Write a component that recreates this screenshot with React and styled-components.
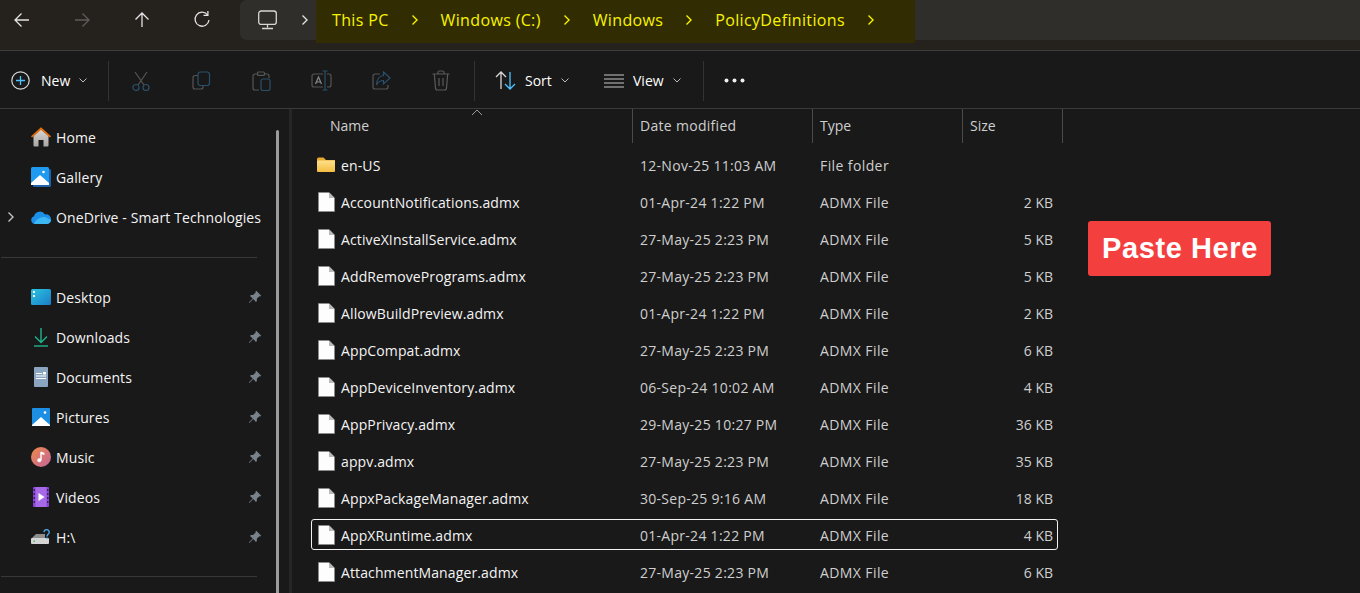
import React from 'react';
import styled, { createGlobalStyle } from 'styled-components';

const GlobalStyle = createGlobalStyle`
  html, body { margin: 0; padding: 0; background: #191919; overflow: hidden; }
  body { font-family: 'Open Sans', 'Noto Sans', sans-serif; }
`;

const quickItems = [
  { name: 'Home', icon: 'home' },
  { name: 'Gallery', icon: 'gallery' },
  { name: 'OneDrive - Smart Technologies', icon: 'cloud', expand: true },
];

const pinnedItems = [
  { name: 'Desktop', icon: 'desktop' },
  { name: 'Downloads', icon: 'downloads' },
  { name: 'Documents', icon: 'documents' },
  { name: 'Pictures', icon: 'pictures' },
  { name: 'Music', icon: 'music' },
  { name: 'Videos', icon: 'videos' },
  { name: 'H:\\', icon: 'drive' },
];

const files = [
  ['en-US', '12-Nov-25 11:03 AM', 'File folder', ''],
  ['AccountNotifications.admx', '01-Apr-24 1:22 PM', 'ADMX File', '2 KB'],
  ['ActiveXInstallService.admx', '27-May-25 2:23 PM', 'ADMX File', '5 KB'],
  ['AddRemovePrograms.admx', '27-May-25 2:23 PM', 'ADMX File', '5 KB'],
  ['AllowBuildPreview.admx', '01-Apr-24 1:22 PM', 'ADMX File', '2 KB'],
  ['AppCompat.admx', '27-May-25 2:23 PM', 'ADMX File', '6 KB'],
  ['AppDeviceInventory.admx', '06-Sep-24 10:02 AM', 'ADMX File', '4 KB'],
  ['AppPrivacy.admx', '29-May-25 10:27 PM', 'ADMX File', '36 KB'],
  ['appv.admx', '27-May-25 2:23 PM', 'ADMX File', '35 KB'],
  ['AppxPackageManager.admx', '30-Sep-25 9:16 AM', 'ADMX File', '18 KB'],
  ['AppXRuntime.admx', '01-Apr-24 1:22 PM', 'ADMX File', '4 KB'],
  ['AttachmentManager.admx', '27-May-25 2:23 PM', 'ADMX File', '6 KB'],
];

const crumbs = ['This PC', 'Windows (C:)', 'Windows', 'PolicyDefinitions'];

const Page = styled.div`
  width: 1360px;
  height: 593px;
  overflow: hidden;
  color: #fff;
  background: #191919;
  display: flex;
  flex-direction: column;
`;

const TopBar = styled.div`
  height: 51px;
  flex: none;
  box-sizing: border-box;
  background: #25211d;
  border-bottom: 1px solid #3f3d3b;
  display: flex;
  align-items: flex-start;
`;

const NavGroup = styled.div`
  width: 240px;
  height: 40px;
  flex: none;
  display: flex;
  align-items: center;
  gap: 16px;
`;

const NavBtn = styled.div`
  width: 44px;
  height: 40px;
  display: flex;
  align-items: center;
  justify-content: center;
`;

const AddressBar = styled.div`
  flex: 1;
  height: 40px;
  background: #2f2e2a;
  border-radius: 6px 0 0 6px;
  display: flex;
  align-items: flex-start;
`;

const PcSlot = styled.div`
  width: 76px;
  height: 40px;
  flex: none;
  display: flex;
  align-items: center;
  padding-left: 18px;
  box-sizing: border-box;
  gap: 24px;
`;

const Highlight = styled.div`
  width: 599px;
  height: 43px;
  flex: none;
  box-sizing: border-box;
  padding: 0 0 3px 16px;
  background: #322c03;
  display: flex;
  align-items: center;
  color: #f8f400;
  font-size: 16px;
  letter-spacing: 0.35px;
`;

const Crumb = styled.span`
  white-space: nowrap;
`;

const CrumbArrow = styled.span`
  width: 52px;
  flex: none;
  display: flex;
  justify-content: center;
`;

const ToolBar = styled.div`
  height: 58px;
  flex: none;
  box-sizing: border-box;
  padding-top: 2px;
  border-bottom: 1px solid #3a3a3a;
  background: #191919;
  display: flex;
  align-items: center;
`;

const NewBtn = styled.div`
  width: 108px;
  flex: none;
  display: flex;
  align-items: center;
  padding-left: 11px;
  box-sizing: border-box;
  font-size: 14px;
  gap: 11px;
`;

const ToolSep = styled.div`
  width: 1px;
  height: 40px;
  background: #333;
  flex: none;
  margin-left: ${(p) => p.$shift || 0}px;
`;

const ToolIcon = styled.div`
  width: 60px;
  height: 40px;
  flex: none;
  display: flex;
  align-items: center;
  justify-content: center;
  margin-left: ${(p) => p.$shift || 0}px;
`;

const TextBtn = styled.div`
  display: flex;
  align-items: center;
  flex: none;
  font-size: 14px;
  gap: ${(p) => p.$gap}px;
  width: ${(p) => p.$width}px;
  padding-left: ${(p) => p.$left}px;
  box-sizing: border-box;
`;

const Chevron = styled.svg`
  margin-left: ${(p) => p.$shift || 0}px;
`;

const Body = styled.div`
  flex: 1;
  display: flex;
  min-height: 0;
`;

const Sidebar = styled.div`
  width: 292px;
  flex: none;
  box-sizing: border-box;
  border-right: 3px solid #262626;
  position: relative;
  padding-top: 8px;
`;

const ScrollThumb = styled.div`
  position: absolute;
  left: 276px;
  top: 21px;
  bottom: 0;
  width: 3px;
  background: #9c9c9c;
  border-radius: 2px 2px 0 0;
`;

const NavItem = styled.div`
  height: 40px;
  display: flex;
  align-items: center;
  font-size: 14px;
  letter-spacing: 0.12px;
  color: #f4f4f4;
`;

const Expander = styled.div`
  width: 30px;
  flex: none;
  display: flex;
  justify-content: center;
  padding-right: 9px;
  box-sizing: border-box;
`;

const NavIcon = styled.div`
  width: 22px;
  height: 22px;
  flex: none;
  margin-right: 4px;
  display: flex;
  align-items: center;
  justify-content: center;
`;

const NavLabel = styled.span`
  white-space: nowrap;
  flex: 1;
`;

const Pin = styled.div`
  width: 14px;
  flex: none;
  margin-right: 27px;
  margin-left: auto;
  display: flex;
`;

const NavDivider = styled.div`
  height: 1px;
  width: 256px;
  margin: ${(p) => p.$margin};
  background: #383838;
`;

const Main = styled.div`
  flex: 1;
  min-width: 0;
  padding-left: 19px;
  position: relative;
`;

const HeaderRow = styled.div`
  height: 34px;
  display: grid;
  grid-template-columns: 322px 180px 150px 100px;
  font-size: 14px;
  color: #cfcfcf;
  position: relative;
`;

const HeaderCell = styled.div`
  display: flex;
  align-items: center;
  padding-left: ${(p) => p.$left}px;
  padding-bottom: 2px;
  letter-spacing: ${(p) => p.$spacing || 0}px;
  border-right: 1px solid #4a4a4a;
  box-sizing: border-box;
`;

const SortCaret = styled.svg`
  position: absolute;
  left: 160px;
  top: 0;
`;

const Rows = styled.div`
  display: flex;
  flex-direction: column;
  width: 747px;
  margin-top: 4px;
`;

const Row = styled.div`
  height: 37px;
  flex: none;
  display: grid;
  grid-template-columns: 322px 180px 146px 94px;
  align-items: center;
  font-size: 14px;
  color: #cfcfcf;
  box-sizing: border-box;
  position: relative;
  ${(p) => p.$focused && `
    &::after {
      content: '';
      position: absolute;
      inset: 2px 0 4px;
      border: 1px solid #f2f2f2;
      border-radius: 3px;
    }
  `}
`;

const NameCell = styled.div`
  display: flex;
  align-items: center;
  color: #f4f4f4;
  padding-left: 6px;
  white-space: nowrap;
  letter-spacing: 0.12px;
`;

const FileGlyph = styled.div`
  width: 24px;
  flex: none;
  display: flex;
  box-sizing: border-box;
  padding-left: ${(p) => (p.$folder ? 0 : 1)}px;
  margin-top: -2px;
`;

const Cell = styled.div`
  white-space: nowrap;
  padding-left: 7px;
  letter-spacing: ${(p) => p.$spacing}px;
`;

const SizeCell = styled.div`
  text-align: right;
  white-space: nowrap;
`;

const PasteBadge = styled.div`
  position: absolute;
  left: 796px;
  top: 112px;
  width: 183px;
  height: 55px;
  padding-left: 1px;
  box-sizing: border-box;
  background: #f43f3f;
  border-radius: 3px;
  color: #fff;
  font-family: 'Liberation Sans', Arial, sans-serif;
  font-weight: 700;
  font-size: 29px;
  display: flex;
  align-items: center;
  justify-content: center;
  letter-spacing: 0.6px;
`;

const Arrow = ({ d, color = '#e4e4e4', size = 18 }) => (
  <svg width={size} height={size} viewBox="0 0 18 18" fill="none" stroke={color} strokeWidth="1.3">
    <path d={d} />
  </svg>
);

const CrumbChevron = ({ color }) => (
  <svg width="8" height="12" viewBox="0 0 8 12" fill="none" stroke={color} strokeWidth="1.4">
    <path d="M1.5 1.5 6 6l-4.5 4.5" />
  </svg>
);

const SmallChevron = ({ shift }) => (
  <Chevron $shift={shift} width="8" height="5" viewBox="0 0 8 5" fill="none" stroke="#bdbdbd" strokeWidth="1">
    <path d="M.5.5 4 4 7.5.5" />
  </Chevron>
);

const FileIcon = () => (
  <svg width="17" height="20" viewBox="0 0 17 20">
    <path d="M.5.5h10.5l5.5 5.5v13.5H.5z" fill="#fdfdfd" stroke="#8c8c8c" strokeWidth=".8" />
    <path d="M11 .8V6h5.2z" fill="#b9b9b9" />
  </svg>
);

const FolderIcon = () => (
  <svg width="18" height="15" viewBox="0 0 18 15">
    <defs>
      <linearGradient id="fold" x1="0" y1="0" x2="0" y2="1">
        <stop offset="0" stopColor="#fde08a" />
        <stop offset="1" stopColor="#f5bd42" />
      </linearGradient>
    </defs>
    <path d="M0 2A1.5 1.5 0 0 1 1.5.5h5L9 3h9v3H0z" fill="#e9a92d" />
    <rect y="3.4" width="18" height="11.6" rx="1" fill="url(#fold)" />
  </svg>
);

const PinIcon = () => (
  <svg width="14" height="14" viewBox="0 0 14 14" fill="#79828a">
    <path d="M8.3.8 13.2 5.7 12.2 6.5 11.4 6.2 8.8 8.8 8.9 11 8 11.9 5.2 9.1 1.4 12.9.9 12.6 4.7 8.6 2 5.9 2.9 5 5 5.1 7.7 2.5 7.5 1.6z" />
  </svg>
);

const NavGlyph = ({ name }) => {
  switch (name) {
    case 'home':
      return (
        <svg width="20" height="20" viewBox="0 0 20 20">
          <defs>
            <linearGradient id="homeBody" x1="0" y1="0" x2="0" y2="1">
              <stop offset="0" stopColor="#d8d6d4" />
              <stop offset="1" stopColor="#a9a7a5" />
            </linearGradient>
          </defs>
          <path d="M2.5 9 10 2.5 17.5 9v9.5a1 1 0 0 1-1 1H12.5V13h-5v6.5H3.5a1 1 0 0 1-1-1z" fill="url(#homeBody)" />
          <path d="M0 9.2 10 .3l10 8.900-1.100 1.300L10 2.800 1.100 10.500z" fill="#e8700d" />
        </svg>
      );
    case 'gallery':
      return (
        <svg width="20" height="20" viewBox="0 0 20 20">
          <rect x="2" y="2" width="18" height="18" rx="1.5" fill="#1f62ad" />
          <rect width="18" height="18" rx="1.5" fill="#1e9bf0" />
          <path d="M0 16 9 8l9 8v2H0z" fill="#fff" />
          <circle cx="12.5" cy="5" r="1.3" fill="#fff" />
        </svg>
      );
    case 'cloud':
      return (
        <svg width="20" height="14" viewBox="0 0 20 14">
          <path d="M4 14a4 4 0 0 1-1-7.800A6 6 0 0 1 14 4.500 4.800 4.800 0 0 1 20 9.500 4.500 4.500 0 0 1 16 14z" fill="#1c8fe8" />
          <path d="M3 14c2-5 6-7 11-7l6 3a4.500 4.500 0 0 1-4 4z" fill="#3bb7f3" />
        </svg>
      );
    case 'desktop':
      return (
        <svg width="20" height="16" viewBox="0 0 20 16">
          <defs>
            <linearGradient id="desk" x1="0" y1="0" x2="1" y2="1">
              <stop offset="0" stopColor="#2bc4e0" />
              <stop offset="1" stopColor="#1a7dc9" />
            </linearGradient>
          </defs>
          <rect width="20" height="16" rx="1.5" fill="url(#desk)" />
          <rect x="2" y="2" width="2" height="2" fill="#fff" />
          <rect x="2" y="6" width="2" height="2" fill="#fff" />
        </svg>
      );
    case 'downloads':
      return (
        <svg width="18" height="20" viewBox="0 0 18 20" fill="none" stroke="#20b48c" strokeWidth="1.4">
          <path d="M9 1v14M3 9.500l6 6 6-6" />
          <path d="M2 19h14" />
        </svg>
      );
    case 'documents':
      return (
        <svg width="14" height="20" viewBox="0 0 14 20">
          <rect width="14" height="20" rx="1" fill="#8ba4c0" />
          <path d="M2 6h6v1H2zM2 8.500h10v1H2zM2 11h10v1H2zM9 5h3v2.500H9z" fill="#fff" />
        </svg>
      );
    case 'pictures':
      return (
        <svg width="18" height="18" viewBox="0 0 18 18">
          <rect width="18" height="18" rx="1" fill="#1c8fe4" />
          <path d="M0 17 9 9l9 8v1H0z" fill="#fff" />
          <circle cx="13" cy="4.5" r="1.3" fill="#fff" />
        </svg>
      );
    case 'music':
      return (
        <svg width="20" height="20" viewBox="0 0 20 20">
          <defs>
            <linearGradient id="mus" x1="0" y1="0" x2="1" y2="1">
              <stop offset="0" stopColor="#ee8a4a" />
              <stop offset="1" stopColor="#c2649c" />
            </linearGradient>
          </defs>
          <circle cx="10" cy="10" r="10" fill="url(#mus)" />
          <path d="M10 5v8" stroke="#fff" strokeWidth="1.4" />
          <path d="M10 4.500 13.500 6v2L10 7z" fill="#fff" />
          <circle cx="8.3" cy="13.3" r="2" fill="#fff" />
        </svg>
      );
    case 'videos':
      return (
        <svg width="16" height="20" viewBox="0 0 16 20">
          <rect width="16" height="20" rx="1" fill="#8a45d8" />
          <rect x="2.5" width="11" height="20" fill="#a66ae8" />
          <path d="M5.500 6v8l6-4z" fill="#fff" />
          <path d="M.6 2h1.200v2H.6zM.6 6h1.200v2H.6zM.6 10h1.200v2H.6zM.6 14h1.200v2H.6zM14.200 2h1.200v2h-1.200zM14.200 6h1.200v2h-1.200zM14.200 10h1.200v2h-1.200zM14.200 14h1.200v2h-1.200z" fill="#2a1845" />
        </svg>
      );
    case 'drive':
      return (
        <svg width="20" height="16" viewBox="0 0 20 16">
          <path d="M1 9 5 5h9v4z" fill="#8e8e8e" />
          <rect y="9" width="18" height="6" rx="1" fill="#d4d4d4" />
          <rect x="2.5" y="11.5" width="1.4" height="1.4" fill="#31c24a" />
          <path d="M13 3.200a2.600 2.600 0 1 1 4 2.200c-.8.600-1 1-1 2.200" fill="none" stroke="#4aa3e6" strokeWidth="1.4" />
          <rect x="15.3" y="8.4" width="1.4" height="1.4" fill="#4aa3e6" />
        </svg>
      );
    default:
      return null;
  }
};

const SideRow = ({ item, pinned }) => (
  <NavItem>
    <Expander>
      {item.expand && <CrumbChevron color="#c4c4c4" />}
    </Expander>
    <NavIcon><NavGlyph name={item.icon} /></NavIcon>
    <NavLabel>{item.name}</NavLabel>
    {pinned && <Pin><PinIcon /></Pin>}
  </NavItem>
);

export default function App() {
  return (
    <Page>
      <GlobalStyle />
      <TopBar>
        <NavGroup>
          <NavBtn><Arrow d="M16 9H2M8.500 2.500 2 9l6.500 6.500" /></NavBtn>
          <NavBtn><Arrow d="M2 9h14M9.500 2.500 16 9l-6.500 6.500" color="#5d5c5a" /></NavBtn>
          <NavBtn><Arrow d="M9 16V2M2.500 8.500 9 2l6.500 6.500" /></NavBtn>
          <NavBtn>
            <svg width="18" height="18" viewBox="0 0 18 18" fill="none" stroke="#e4e4e4" strokeWidth="1.3">
              <path d="M14.500 3.800A7 7 0 1 0 16 9" />
              <path d="M10.500 4.400h4.400V0" />
            </svg>
          </NavBtn>
        </NavGroup>
        <AddressBar>
          <PcSlot>
            <svg width="19" height="20" viewBox="0 0 19 20" fill="none" stroke="#d6d6d6" strokeWidth="1.3">
              <rect x=".7" y="1" width="17.6" height="13.4" rx="2.5" />
              <path d="M9.500 14.500v3M4 18.500h11" />
            </svg>
            <CrumbChevron color="#e0e0e0" />
          </PcSlot>
          <Highlight>
            {crumbs.map((c) => (
              <React.Fragment key={c}>
                <Crumb>{c}</Crumb>
                <CrumbArrow><CrumbChevron color="#f8f400" /></CrumbArrow>
              </React.Fragment>
            ))}
          </Highlight>
        </AddressBar>
      </TopBar>

      <ToolBar>
        <NewBtn>
          <svg width="19" height="19" viewBox="0 0 19 19" fill="none">
            <circle cx="9.5" cy="9.5" r="8.7" stroke="#d8d8d8" strokeWidth="1.2" />
            <path d="M9.500 5v9M5 9.500h9" stroke="#4cc2ff" strokeWidth="1.3" />
          </svg>
          <span>New</span>
          <SmallChevron shift={-2} />
        </NewBtn>
        <ToolSep />
        <ToolIcon $shift={2}>
          <svg width="18" height="20" viewBox="0 0 18 20" fill="none" stroke="#29506b" strokeWidth="1.2">
            <path d="M3 1l9 13M15 1 6 14" stroke="#555" />
            <circle cx="4" cy="16.5" r="3" />
            <circle cx="14" cy="16.5" r="3" />
          </svg>
        </ToolIcon>
        <ToolIcon>
          <svg width="19" height="19" viewBox="0 0 19 19" fill="none" strokeWidth="1.2">
            <path d="M6 4.500H3a2 2 0 0 0-2 2V16a2 2 0 0 0 2 2h6a2 2 0 0 0 2-2v-1" stroke="#555" />
            <rect x="6" y="1" width="11.5" height="13.5" rx="2.5" stroke="#29506b" />
          </svg>
        </ToolIcon>
        <ToolIcon>
          <svg width="19" height="20" viewBox="0 0 19 20" fill="none" strokeWidth="1.2">
            <path d="M6 3H3a2 2 0 0 0-2 2v12a2 2 0 0 0 2 2h4M12 3h3a2 2 0 0 1 2 2v2" stroke="#555" />
            <rect x="5.5" y="1" width="7" height="3.4" rx="1" stroke="#555" />
            <rect x="9" y="8" width="9" height="11.5" rx="2" stroke="#29506b" />
          </svg>
        </ToolIcon>
        <ToolIcon>
          <svg width="21" height="21" viewBox="0 0 21 21" fill="none" strokeWidth="1.2">
            <path d="M12 4H3a2 2 0 0 0-2 2v9a2 2 0 0 0 2 2h9M16 4h2a2 2 0 0 1 2 2v9a2 2 0 0 1-2 2h-2" stroke="#555" />
            <path d="M14 1v19M11.500 1h5M11.500 20h5" stroke="#29506b" />
            <path d="M4.500 14 7.500 7l3 7M5.600 12h4" stroke="#8a8a8a" />
          </svg>
        </ToolIcon>
        <ToolIcon>
          <svg width="19" height="19" viewBox="0 0 19 19" fill="none" strokeWidth="1.2">
            <path d="M8 3H3a2 2 0 0 0-2 2v11a2 2 0 0 0 2 2h11a2 2 0 0 0 2-2v-2" stroke="#555" />
            <path d="M11.500 1 18 7l-6.500 6V9.500C8 9.500 6 11 4.500 14c0-5.500 3-9 7-9.500z" stroke="#29506b" />
          </svg>
        </ToolIcon>
        <ToolIcon>
          <svg width="18" height="21" viewBox="0 0 18 21" fill="none" stroke="#5a5a5a" strokeWidth="1.2">
            <path d="M.5 4h17M6 4V2.500A1.500 1.500 0 0 1 7.500 1h3A1.500 1.500 0 0 1 12 2.500V4M2.300 4l1.200 14a2 2 0 0 0 2 2h7a2 2 0 0 0 2-2L15.700 4M7 8v8M11 8v8" />
          </svg>
        </ToolIcon>
        <ToolSep $shift={3} />
        <TextBtn $width={108} $left={20} $gap={9}>
          <svg width="21" height="19" viewBox="0 0 21 19" fill="none" strokeWidth="1.3">
            <path d="M6 18V1M1 6l5-5 5 5" stroke="#d8d8d8" />
            <path d="M15 1v17M10 13l5 5 5-5" stroke="#4cc2ff" />
          </svg>
          <span>Sort</span>
          <SmallChevron />
        </TextBtn>
        <TextBtn $width={120} $left={21} $gap={9}>
          <svg width="20" height="14" viewBox="0 0 20 14" stroke="#c8c8c8" strokeWidth="1.1">
            <path d="M0 1h20M0 5h20M0 9h20M0 13h20" />
          </svg>
          <span>View</span>
          <SmallChevron />
        </TextBtn>
        <ToolSep />
        <ToolIcon>
          <svg width="21" height="5" viewBox="0 0 21 5" fill="#f0f0f0">
            <circle cx="2.5" cy="2.5" r="2" />
            <circle cx="10.5" cy="2.5" r="2" />
            <circle cx="18.5" cy="2.5" r="2" />
          </svg>
        </ToolIcon>
      </ToolBar>

      <Body>
        <Sidebar>
          <ScrollThumb />
          {quickItems.map((i) => <SideRow key={i.name} item={i} />)}
          <NavDivider $margin="20px 0 19px 1px" />
          {pinnedItems.map((i) => <SideRow key={i.name} item={i} pinned />)}
          <NavDivider $margin="19px 0 0 1px" />
        </Sidebar>
        <Main>
          <HeaderRow>
            <SortCaret width="12" height="7" viewBox="0 0 12 7" fill="none" stroke="#9a9a9a">
              <path d="M1 6l5-5 5 5" />
            </SortCaret>
            <HeaderCell $left={19}>Name</HeaderCell>
            <HeaderCell $left={7} $spacing={0.3}>Date modified</HeaderCell>
            <HeaderCell $left={7}>Type</HeaderCell>
            <HeaderCell $left={7}>Size</HeaderCell>
          </HeaderRow>
          <Rows>
            {files.map(([name, date, type, size], i) => (
              <Row key={name} $focused={name === 'AppXRuntime.admx'}>
                <NameCell>
                  <FileGlyph $folder={i === 0}>{i === 0 ? <FolderIcon /> : <FileIcon />}</FileGlyph>
                  {name}
                </NameCell>
                <Cell $spacing={0.28}>{date}</Cell>
                <Cell $spacing={0.4}>{type}</Cell>
                <SizeCell>{size}</SizeCell>
              </Row>
            ))}
          </Rows>
          <PasteBadge>Paste Here</PasteBadge>
        </Main>
      </Body>
    </Page>
  );
}
